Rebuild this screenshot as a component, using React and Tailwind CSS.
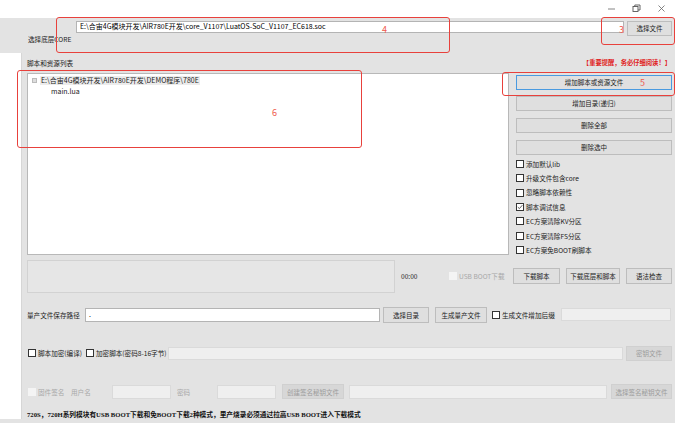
const font = "font-['Noto_Sans_CJK_SC','Liberation_Sans',sans-serif]";

function Btn({ children, className = "", disabled, focused }) {
  const tone = disabled
    ? "bg-[#d7d7d7] border-[#d0d0d0] text-[#9c9c9c]"
    : focused
    ? "bg-[#e0e0e0] border-[#4a9ae0] text-[#222]"
    : "bg-[#dfdfdf] border-[#bdbdbd] text-[#222]";
  return (
    <div
      className={`flex items-center justify-center whitespace-nowrap border text-[6.5px] leading-none ${tone} ${className}`}
    >
      {children}
    </div>
  );
}

function Check({ label, checked, disabled, className = "" }) {
  return (
    <div className={`flex items-center gap-[2px] whitespace-nowrap text-[6.6px] leading-none ${className}`}>
      <span
        className={`flex h-[8px] w-[8px] shrink-0 items-center justify-center border ${
          disabled ? "border-[#f4f4f4] bg-[#f4f4f4]" : "border-[#333] bg-white"
        }`}
      >
        {checked && (
          <svg width="6" height="6" viewBox="0 0 6 6">
            <path d="M0.8 3.1 L2.4 4.6 L5.3 1.2" fill="none" stroke="#333" strokeWidth="0.8" />
          </svg>
        )}
      </span>
      <span className={disabled ? "text-[#a8a8a8]" : "text-[#222]"}>{label}</span>
    </div>
  );
}

function Field({ children, className = "", disabled }) {
  return (
    <div
      className={`flex items-center whitespace-nowrap border px-[3px] text-[7px] leading-none ${
        disabled ? "border-[#dadada] bg-[#efefef]" : "border-[#b4b4b4] bg-white"
      } ${className}`}
    >
      {children}
    </div>
  );
}

function RedBox({ className }) {
  return (
    <div
      className={`pointer-events-none absolute rounded-[3px] border-[1.5px] border-[#e8413c] ${className}`}
    />
  );
}

function RedNum({ children, className }) {
  return (
    <span className={`absolute text-[9px] leading-none text-[#ef5a4e] ${className}`}>{children}</span>
  );
}

export default function App() {
  const options = [
    { label: "添加默认lib" },
    { label: "升级文件包含core" },
    { label: "忽略脚本依赖性" },
    { label: "脚本调试信息", checked: true },
    { label: "EC方案清除KV分区" },
    { label: "EC方案清除FS分区" },
    { label: "EC方案免BOOT刷脚本" },
  ];

  return (
    <div className={`relative flex h-[427px] w-[675px] flex-col overflow-hidden bg-white ${font}`}>
      {/* title bar */}
      <div className="flex h-[20px] items-center justify-end gap-[16px] pr-[9px] text-[#555]">
        <svg width="9" height="9" viewBox="0 0 9 9">
          <path d="M1 5 H8" stroke="#666" strokeWidth="0.8" />
        </svg>
        <svg width="9" height="9" viewBox="0 0 9 9">
          <rect x="1" y="2.5" width="5" height="5" fill="none" stroke="#555" strokeWidth="0.9" />
          <path d="M2.8 2.5 V1 H8 V6 H6" fill="none" stroke="#555" strokeWidth="0.9" />
        </svg>
        <svg width="9" height="9" viewBox="0 0 9 9">
          <path d="M1.5 1.5 L7.5 7.5 M7.5 1.5 L1.5 7.5" stroke="#666" strokeWidth="0.8" />
        </svg>
      </div>

      <div className="flex flex-1 flex-col bg-[#e3e3e3]">
        {/* core row */}
        <div className="flex h-[35px] items-start pl-[28px] pr-[3px] pt-[3px]">
          <span className="mt-[15px] w-[48px] whitespace-nowrap text-[6.6px] leading-none text-[#222]">选择底层CORE</span>
          <Field className="h-[12px] w-[548px]">
            E:\合宙4G模块开发\AIR780E开发\core_V1107\LuatOS-SoC_V1107_EC618.soc
          </Field>
          <Btn className="ml-[3px] h-[15px] w-[45px]">选择文件</Btn>
        </div>

        <div className="flex flex-1">
          <div className="w-[22px] border-r border-[#d6d6d6] bg-white" />
          <div className="flex flex-1 flex-col pl-[5px] pr-[2px]">
            {/* list header */}
            <div className="flex h-[20px] items-center justify-between">
              <span className="text-[6.6px] leading-none text-[#222]">脚本和资源列表</span>
              <span className="pr-[2px] font-['Liberation_Serif','Noto_Sans_CJK_SC',serif] text-[6.3px] font-bold leading-none text-[#e02020]">
                【重要提醒，务必仔细阅读！】
              </span>
            </div>

            <div className="flex gap-[7px]">
              <div className="h-[182px] w-[482px] border border-[#b8b8b8] bg-white pl-[4px] pt-[2px] text-[7px] leading-none text-[#222]">
                <div className="flex h-[10px] items-center gap-[3px]">
                  <span className="h-[5px] w-[5px] border border-[#bbb] bg-[#ddd]" />
                  <span className="bg-[#ececec] px-[1px] py-[1px]">
                    E:\合宙4G模块开发\AIR780E开发\DEMO程序\780E
                  </span>
                </div>
                <div className="flex h-[11px] items-center pl-[19px]">main.lua</div>
              </div>

              <div className="flex w-[156px] flex-col pt-[2px]">
                <Btn focused className="h-[15px]">增加脚本或资源文件</Btn>
                <Btn className="mt-[6px] h-[15px]">增加目录(递归)</Btn>
                <Btn className="mt-[7px] h-[15px]">删除全部</Btn>
                <Btn className="mt-[7px] h-[15px]">删除选中</Btn>
                <div className="mt-[5px] flex flex-col gap-[6.4px]">
                  {options.map((o) => (
                    <Check key={o.label} label={o.label} checked={o.checked} />
                  ))}
                </div>
              </div>
            </div>

            {/* progress row */}
            <div className="mt-[5px] flex h-[33px] items-center">
              <div className="h-[33px] w-[368px] border border-[#d2d2d2] bg-[#e6e6e6]" />
              <span className="ml-[6px] w-[48px] text-[6.6px] leading-none text-[#222]">00:00</span>
              <Check disabled label="USB BOOT下载" className="w-[64px]" />
              <Btn className="h-[16px] w-[47px]">下载脚本</Btn>
              <Btn className="ml-[6px] h-[16px] w-[54px]">下载底层和脚本</Btn>
              <Btn className="ml-[6px] h-[16px] w-[46px]">语法检查</Btn>
            </div>

            {/* path row */}
            <div className="mt-[14px] flex h-[16px] items-center">
              <span className="w-[58px] whitespace-nowrap text-[6.6px] leading-none text-[#222]">量产文件保存路径</span>
              <Field className="h-[14px] w-[295px]">.</Field>
              <Btn className="ml-[3px] h-[16px] w-[46px]">选择目录</Btn>
              <Btn className="ml-[6px] h-[16px] w-[52px]">生成量产文件</Btn>
              <Check label="生成文件增加后缀" className="ml-[5px] w-[69px]" />
              <Field disabled className="h-[13px] w-[110px]" />
            </div>

            {/* encrypt row */}
            <div className="mt-[23px] flex h-[15px] items-center">
              <Check label="脚本加密(编译)" className="ml-[1px] w-[58px]" />
              <Check label="加密脚本(密码8-16字节)" className="w-[82px]" />
              <Field disabled className="h-[13px] w-[455px]" />
              <Btn disabled className="ml-[3px] h-[15px] w-[46px]">密钥文件</Btn>
            </div>

            {/* sign row */}
            <div className="mt-[23px] flex h-[16px] items-center">
              <Check disabled label="固件签名" className="ml-[1px] w-[43px]" />
              <span className="w-[41px] text-[6.6px] leading-none text-[#a8a8a8]">用户名</span>
              <Field disabled className="h-[14px] w-[59px]" />
              <span className="ml-[6px] w-[40px] text-[6.6px] leading-none text-[#a8a8a8]">密码</span>
              <Field disabled className="h-[14px] w-[59px]" />
              <Btn disabled className="ml-[6px] h-[15px] w-[62px]">创建签名秘钥文件</Btn>
              <Field disabled className="ml-[5px] h-[14px] w-[258px]" />
              <Btn disabled className="ml-[4px] h-[15px] w-[61px]">选择签名秘钥文件</Btn>
            </div>

            {/* notice */}
            <div className="mt-[12px] whitespace-nowrap font-['Liberation_Serif','Noto_Sans_CJK_SC',serif] text-[6.7px] font-bold leading-none text-[#111]">
              720S，720H系列模块有USB BOOT下载和免BOOT下载2种模式，里产烧录必须通过拉高USB BOOT进入下载模式
            </div>
          </div>
        </div>
        <div className="h-[4px]" />
      </div>
      <div className="h-[5px] bg-white" />

      {/* annotations */}
      <RedBox className="left-[56px] top-[17px] h-[36px] w-[394px]" />
      <RedNum className="left-[382px] top-[25px]">4</RedNum>
      <RedBox className="left-[601px] top-[17px] h-[28px] w-[74px]" />
      <RedNum className="left-[619px] top-[25px]">3</RedNum>
      <RedBox className="left-[502px] top-[72px] h-[24px] w-[173px]" />
      <RedNum className="left-[640px] top-[78px]">5</RedNum>
      <RedBox className="left-[17px] top-[70px] h-[78px] w-[345px]" />
      <RedNum className="left-[272px] top-[108px]">6</RedNum>
    </div>
  );
}
